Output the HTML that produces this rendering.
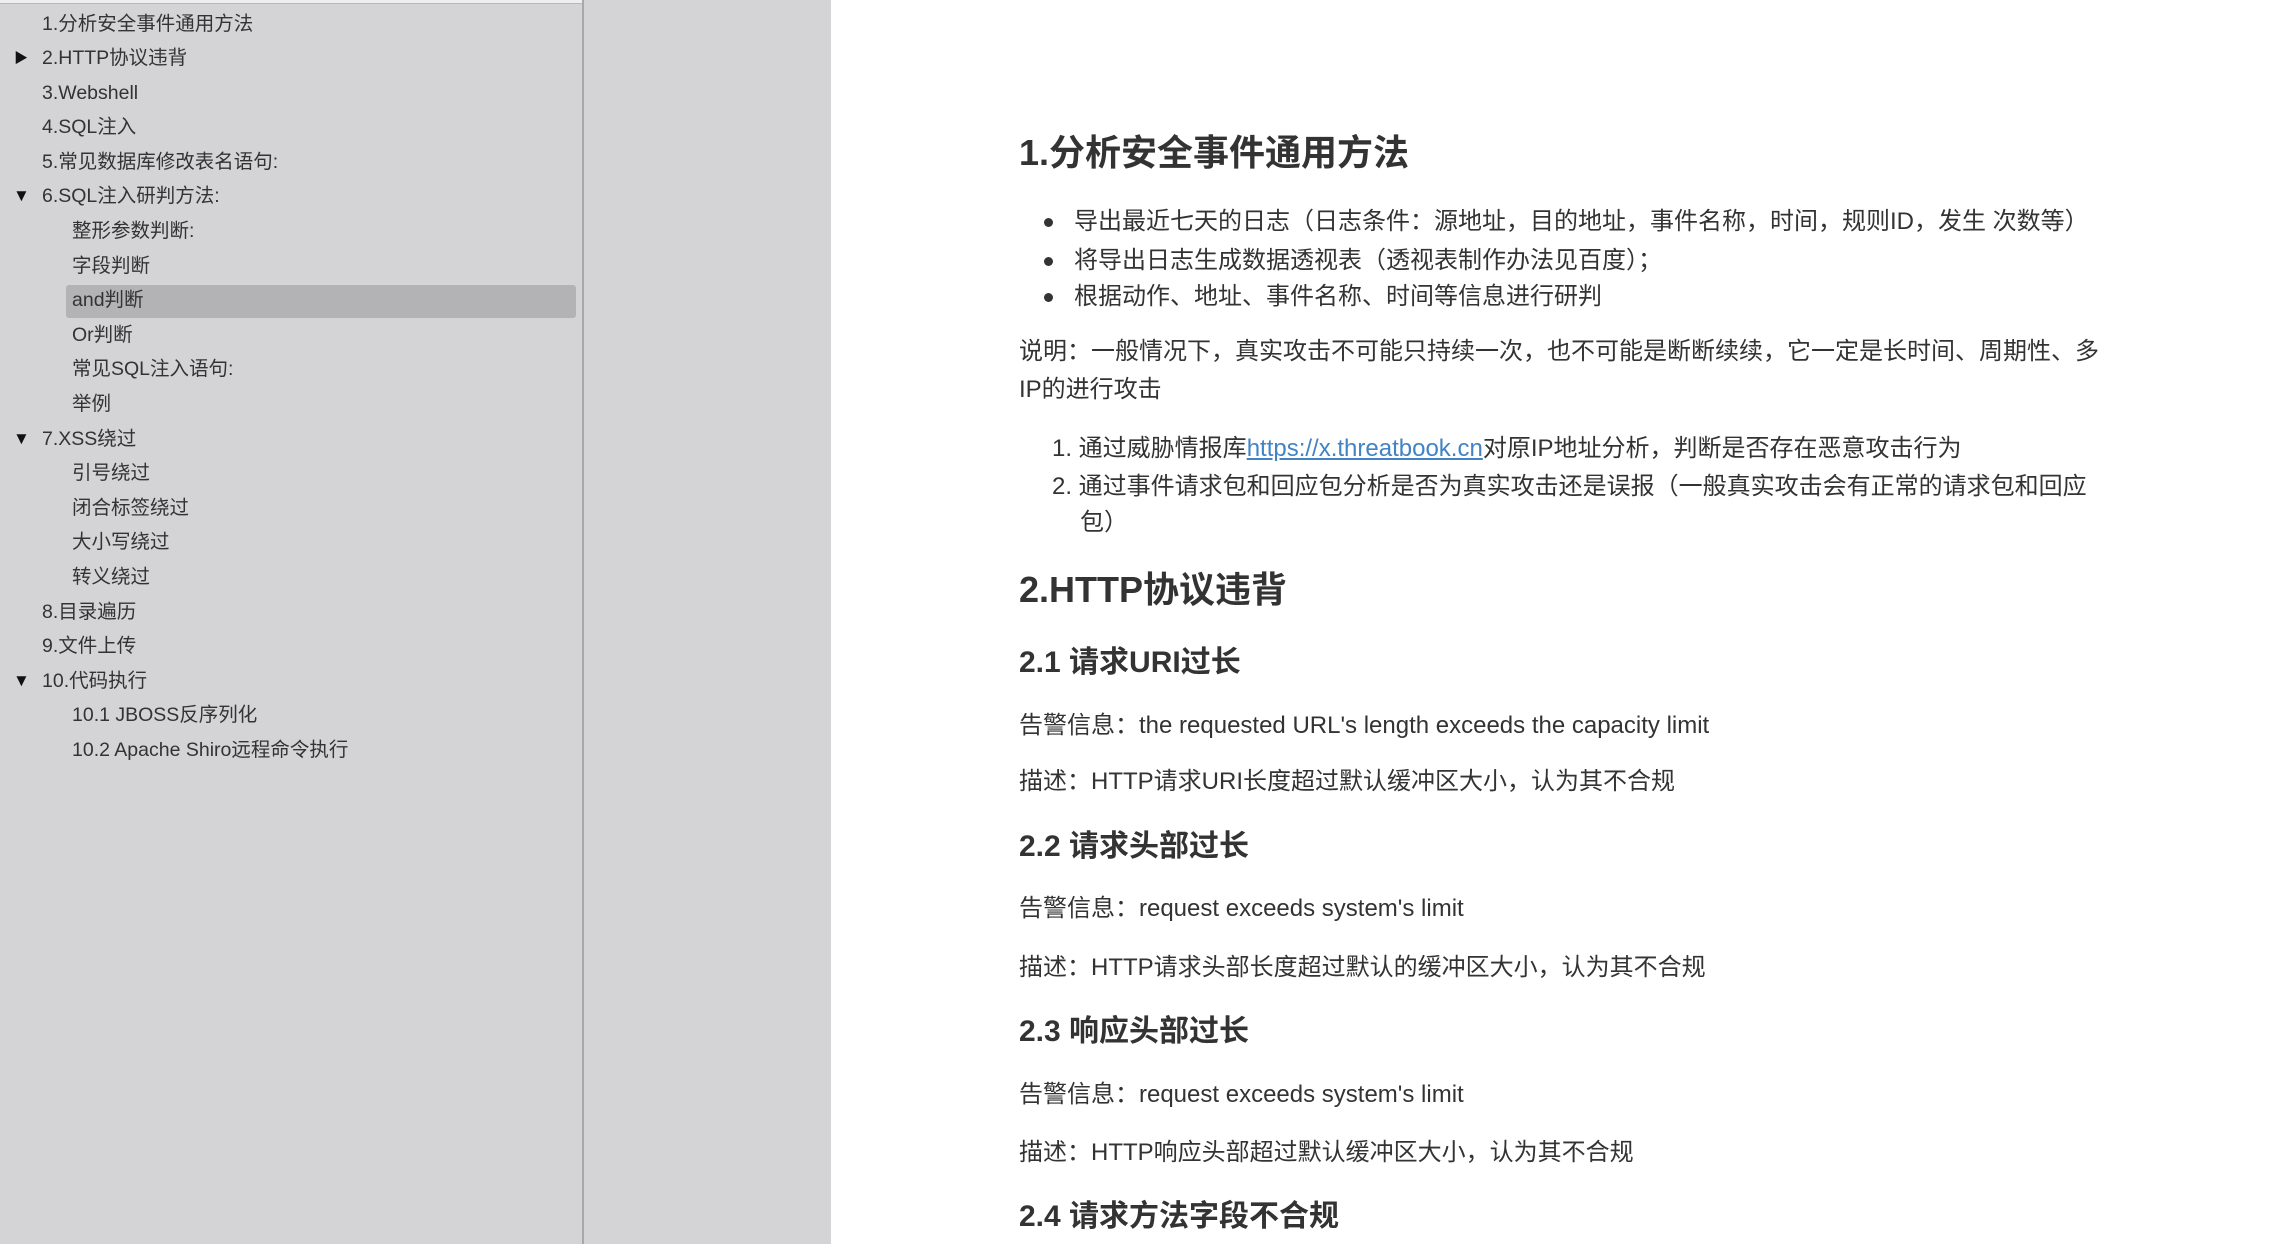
<!DOCTYPE html>
<html><head><meta charset="utf-8"><style>
html,body{margin:0;padding:0;width:2288px;height:1244px;overflow:hidden;background:#fff;}
body{font-family:"Liberation Sans","Noto Sans CJK SC",sans-serif;color:#333;position:relative;}
#side{position:absolute;left:0;top:0;width:582px;height:1244px;background:#d4d4d7;}
#side2{position:absolute;left:582px;top:0;width:247px;height:1244px;background:#d4d4d7;border-left:2px solid #a8a8ab;}
#topstrip{position:absolute;left:0;top:0;width:582px;height:3px;background:#eeeef0;border-bottom:1px solid #b8b8bb;}
.s{position:absolute;font-size:19.5px;line-height:30px;height:30px;white-space:nowrap;color:#333;}
.tri{position:absolute;left:14px;font-size:14px;line-height:30px;color:#111;}
.tri.d{font-size:17px;left:13px;}
.hl{position:absolute;left:66px;top:285px;width:510px;height:33px;background:#b3b3b5;border-radius:3px;}
.t{position:absolute;white-space:nowrap;font-size:24px;line-height:34px;color:#333;}
.h1{position:absolute;white-space:nowrap;font-size:36px;font-weight:bold;line-height:46px;color:#333;}
.h2{position:absolute;white-space:nowrap;font-size:30px;font-weight:bold;line-height:40px;color:#333;}
a{color:#4183c4;text-decoration:underline;}
.dot{position:absolute;left:1044px;width:9px;height:9px;border-radius:50%;background:#333;}
</style></head><body>
<div id="side"></div><div id="side2"></div><div id="topstrip"></div>
<div class="hl"></div>
<div class="s" style="left:42px;top:9px">1.分析安全事件通用方法</div>
<div class="tri" style="top:43px">▶</div><div class="s" style="left:42px;top:43px">2.HTTP协议违背</div>
<div class="s" style="left:42px;top:78px">3.Webshell</div>
<div class="s" style="left:42px;top:112px">4.SQL注入</div>
<div class="s" style="left:42px;top:147px">5.常见数据库修改表名语句:</div>
<div class="tri d" style="top:181px">▼</div><div class="s" style="left:42px;top:181px">6.SQL注入研判方法:</div>
<div class="s" style="left:72px;top:216px">整形参数判断:</div>
<div class="s" style="left:72px;top:251px">字段判断</div>
<div class="s" style="left:72px;top:285px">and判断</div>
<div class="s" style="left:72px;top:320px">Or判断</div>
<div class="s" style="left:72px;top:354px">常见SQL注入语句:</div>
<div class="s" style="left:72px;top:389px">举例</div>
<div class="tri d" style="top:424px">▼</div><div class="s" style="left:42px;top:424px">7.XSS绕过</div>
<div class="s" style="left:72px;top:458px">引号绕过</div>
<div class="s" style="left:72px;top:493px">闭合标签绕过</div>
<div class="s" style="left:72px;top:527px">大小写绕过</div>
<div class="s" style="left:72px;top:562px">转义绕过</div>
<div class="s" style="left:42px;top:597px">8.目录遍历</div>
<div class="s" style="left:42px;top:631px">9.文件上传</div>
<div class="tri d" style="top:666px">▼</div><div class="s" style="left:42px;top:666px">10.代码执行</div>
<div class="s" style="left:72px;top:700px">10.1 JBOSS反序列化</div>
<div class="s" style="left:72px;top:735px">10.2 Apache Shiro远程命令执行</div>

<div class="h1" style="left:1019px;top:130px">1.分析安全事件通用方法</div>
<div class="dot" style="top:218px"></div><div class="t" style="left:1074px;top:205px">导出最近七天的日志（日志条件：源地址，目的地址，事件名称，时间，规则ID，发生 次数等）</div>
<div class="dot" style="top:257px"></div><div class="t" style="left:1074px;top:244px">将导出日志生成数据透视表（透视表制作办法见百度）；</div>
<div class="dot" style="top:293px"></div><div class="t" style="left:1074px;top:280px">根据动作、地址、事件名称、时间等信息进行研判</div>
<div class="t" style="left:1019px;top:335px">说明：一般情况下，真实攻击不可能只持续一次，也不可能是断断续续，它一定是长时间、周期性、多</div>
<div class="t" style="left:1019px;top:373px">IP的进行攻击</div>
<div class="t" style="left:1052px;top:432px">1. 通过威胁情报库<a>https://x.threatbook.cn</a>对原IP地址分析，判断是否存在恶意攻击行为</div>
<div class="t" style="left:1052px;top:470px">2. 通过事件请求包和回应包分析是否为真实攻击还是误报（一般真实攻击会有正常的请求包和回应</div>
<div class="t" style="left:1080px;top:506px">包）</div>
<div class="h1" style="left:1019px;top:567px">2.HTTP协议违背</div>
<div class="h2" style="left:1019px;top:643px">2.1 请求URI过长</div>
<div class="t" style="left:1019px;top:709px">告警信息：the requested URL's length exceeds the capacity limit</div>
<div class="t" style="left:1019px;top:765px">描述：HTTP请求URI长度超过默认缓冲区大小，认为其不合规</div>
<div class="h2" style="left:1019px;top:827px">2.2 请求头部过长</div>
<div class="t" style="left:1019px;top:892px">告警信息：request exceeds system's limit</div>
<div class="t" style="left:1019px;top:951px">描述：HTTP请求头部长度超过默认的缓冲区大小，认为其不合规</div>
<div class="h2" style="left:1019px;top:1012px">2.3 响应头部过长</div>
<div class="t" style="left:1019px;top:1078px">告警信息：request exceeds system's limit</div>
<div class="t" style="left:1019px;top:1136px">描述：HTTP响应头部超过默认缓冲区大小，认为其不合规</div>
<div class="h2" style="left:1019px;top:1197px">2.4 请求方法字段不合规</div>
</body></html>
